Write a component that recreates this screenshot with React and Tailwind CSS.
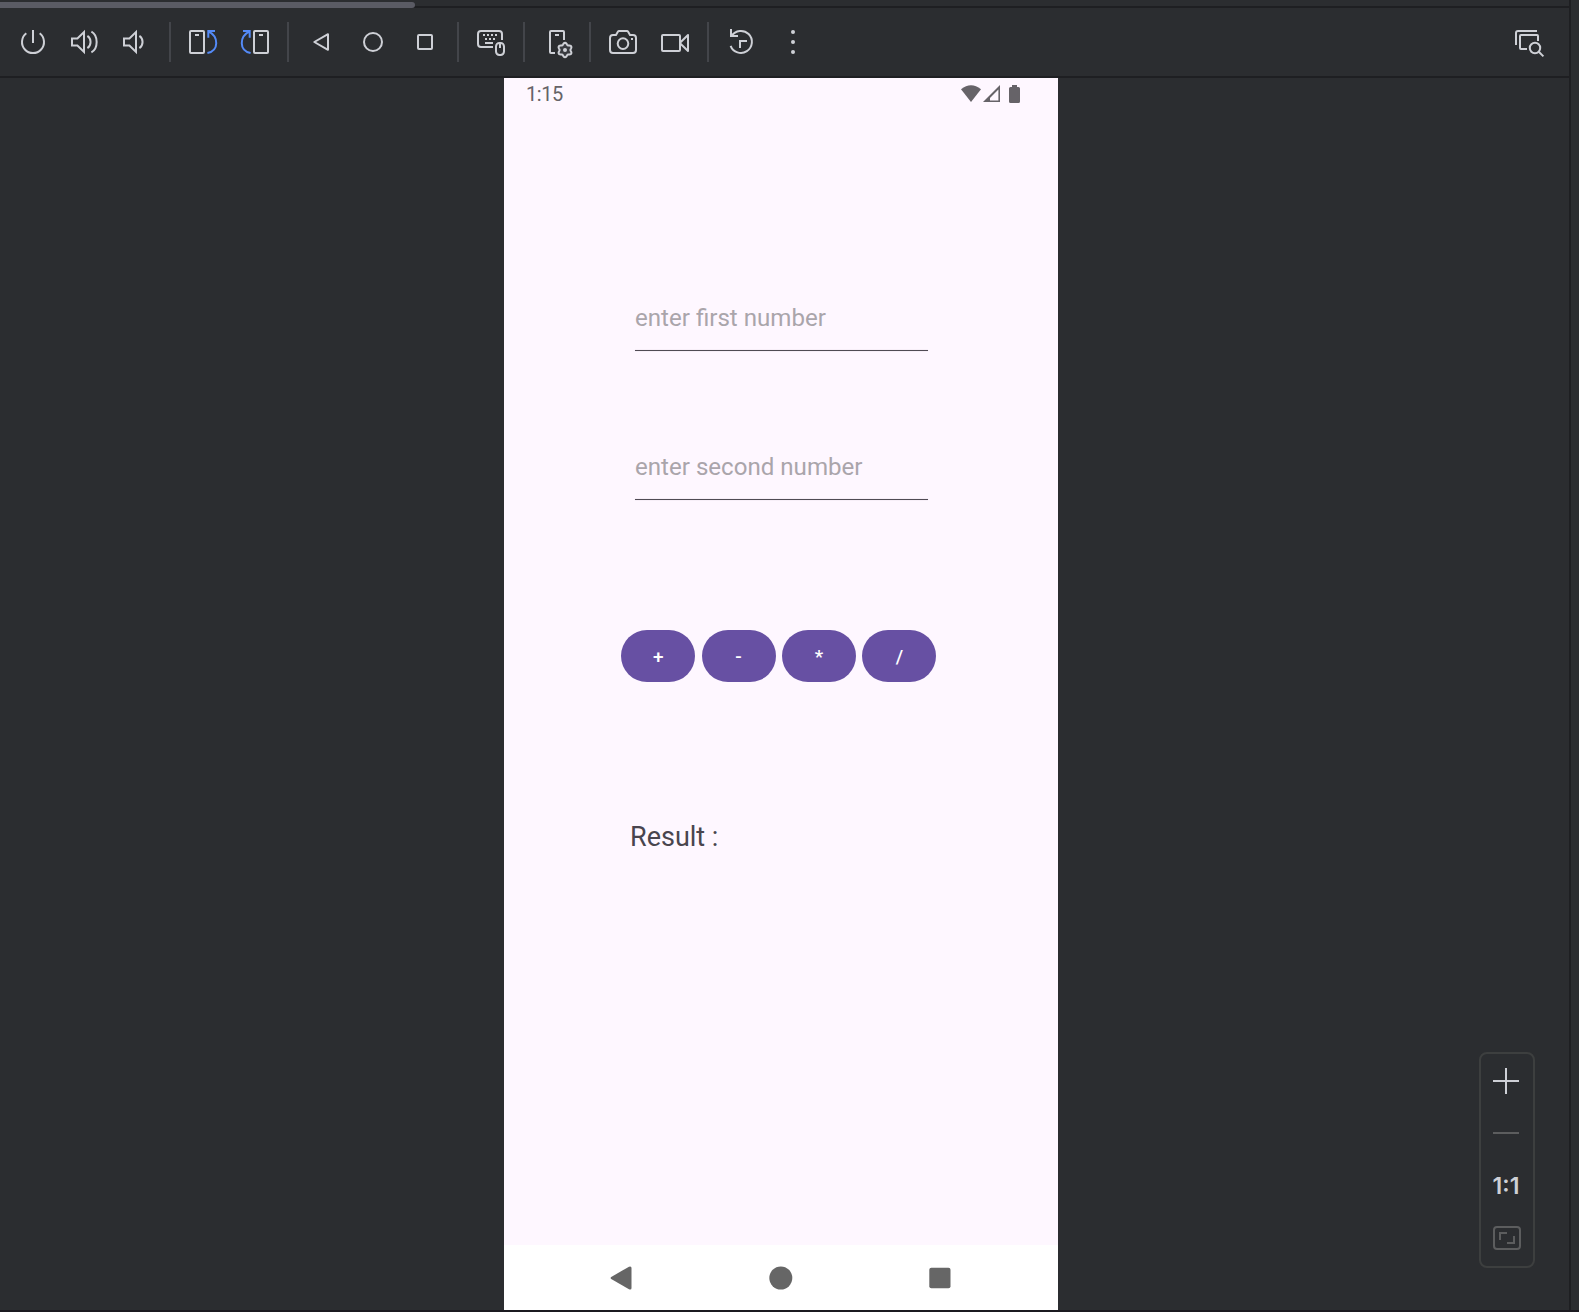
import React from "react";

const LIGHT = "#ced0d6";

function Icon({ children, className = "" }) {
  return (
    <svg
      className={`h-10 w-10 shrink-0 ${className}`}
      viewBox="0 0 40 40"
      fill="none"
      stroke={LIGHT}
      strokeWidth="2"
    >
      {children}
    </svg>
  );
}

function Separator() {
  return <div className="h-10 w-0.5 shrink-0 bg-[#43454a]" />;
}

const SPEAKER = "M7 16.4H12.4L19 10V30L12.4 23.6H7Z";

function RotateDrawing() {
  return (
    <>
      <rect x="7" y="9" width="14" height="22" rx="1" />
      <path d="M12 13H16" />
      <path d="M32 9H25.3V15.7M25.5 9.3C35.8 14.5 36.2 28.5 24.4 31" stroke="#548af7" />
    </>
  );
}

const GEAR = Array.from({ length: 72 }, (_, i) => {
  const a = (i / 72) * Math.PI * 2;
  const r = 6.3 + 0.9 * Math.cos(6 * a);
  return `${(28 + r * Math.sin(a)).toFixed(2)},${(28 - r * Math.cos(a)).toFixed(2)}`;
}).join(" ");

function Toolbar() {
  return (
    <div className="flex h-[70px] shrink-0 items-center justify-between border-b-2 border-[#1e1f22] pl-[13px] pr-5">
      <div className="flex items-center gap-3">
        <Icon>
          <path d="M13.3 11.3A11 11 0 1 0 26.7 11.3M20 8V21" />
        </Icon>
        <Icon>
          <path d={SPEAKER} />
          <path d="M22.4 13.8C26.6 16.5 26.6 23.5 22.4 26.2M26.4 9.6C33.4 13.5 33.4 26.5 26.4 30.4" />
        </Icon>
        <Icon>
          <path d={SPEAKER} />
          <path d="M22.4 13.8C26.6 16.5 26.6 23.5 22.4 26.2" />
        </Icon>
        <Separator />
        <Icon>
          <RotateDrawing />
        </Icon>
        <Icon className="-scale-x-100">
          <RotateDrawing />
        </Icon>
        <Separator />
        <Icon>
          <path d="M27 12.2V27.8L13.3 20Z" strokeLinejoin="round" />
        </Icon>
        <Icon>
          <circle cx="20" cy="20" r="9" />
        </Icon>
        <Icon>
          <rect x="13" y="13" width="14" height="14" rx="1" />
        </Icon>
        <Separator />
        <Icon>
          <path d="M31 18V12A3 3 0 0 0 28 9H10A3 3 0 0 0 7 12V22A3 3 0 0 0 10 25H22" />
          <path d="M12 13H26" strokeDasharray="2 2" />
          <path d="M14 17H24" strokeDasharray="2 2" />
          <path d="M14 21H22M29 21V26" />
          <rect x="25" y="21" width="8" height="12" rx="3.4" />
        </Icon>
        <Separator />
        <Icon>
          <path d="M27 18V10A1 1 0 0 0 26 9H14A1 1 0 0 0 13 10V30A1 1 0 0 0 14 31H18M18 13H22" />
          <polygon points={GEAR} fill="#393b40" />
          <circle cx="28" cy="28" r="2" fill={LIGHT} stroke="none" />
        </Icon>
        <Separator />
        <Icon>
          <path d="M10 13H13L15 9.6Q15.4 9 16 9H24Q24.6 9 25 9.6L27 13H30A3 3 0 0 1 33 16V28A3 3 0 0 1 30 31H10A3 3 0 0 1 7 28V16A3 3 0 0 1 10 13Z" />
          <circle cx="20" cy="21.6" r="5.3" />
          <path d="M28 17H30" />
        </Icon>
        <Icon>
          <rect x="7" y="13" width="18" height="16" rx="1" />
          <path d="M25.5 20.2L33 13V29L25.5 21.8" strokeLinejoin="round" />
        </Icon>
        <Separator />
        <Icon>
          <path d="M10 7V14H17M10.6 14A11 11 0 1 1 9.6 23.8M19 26V19H26" />
        </Icon>
        <Icon>
          <g fill={LIGHT} stroke="none">
            <circle cx="20" cy="10" r="2" />
            <circle cx="20" cy="20" r="2" />
            <circle cx="20" cy="30" r="2" />
          </g>
        </Icon>
      </div>
      <Icon>
        <path d="M7 23V11A2 2 0 0 1 9 9H28" />
        <path d="M29 19V14A1 1 0 0 0 28 13H12A1 1 0 0 0 11 14V26A1 1 0 0 0 12 27H18" />
        <circle cx="26" cy="26" r="5.2" />
        <path d="M29.8 29.8L34.4 34.4" />
      </Icon>
    </div>
  );
}

function Field({ text }) {
  return (
    <div className="flex h-[47px] w-[293px] flex-col justify-between">
      <div className="text-[24.1px] leading-7 text-[#aaa5ab]">{text}</div>
      <div className="h-px bg-[#504b54] shadow-[0_0_1px_#b5afb8]" />
    </div>
  );
}

function Phone() {
  return (
    <div className="flex h-full w-[554px] flex-col bg-[#fef7ff] font-['Roboto',sans-serif]">
      <div className="flex h-8 items-center justify-between pl-[22px] pr-[38px] text-[#666368]">
        <span className="text-[20px] leading-8 tracking-[-0.4px]">1:15</span>
        <svg className="h-[18px] w-[59px]" viewBox="0 0 59 18" fill="currentColor">
          <path d="M0 4.3Q10-3.6 20 4.3L10 17Z" />
          <path fillRule="evenodd" d="M39 0V17H22ZM37.4 4.4L29 13V15.4H37.4Z" />
          <path d="M51 0H56V2H57.5Q59 2 59 3.5V16.5Q59 18 57.5 18H49.5Q48 18 48 16.5V3.5Q48 2 49.5 2H51Z" />
        </svg>
      </div>
      <div className="flex flex-1 flex-col">
        <div className="flex flex-col gap-[102px] pl-[131px] pt-[194px]">
          <Field text="enter first number" />
          <Field text="enter second number" />
        </div>
        <div className="mt-[130px] flex gap-[6.4px] pl-[117.2px]">
          {["+", "-", "*", "/"].map((op) => (
            <button
              key={op}
              className="h-[52px] w-[74px] rounded-[26px] bg-[#6750a3] pt-0.5 text-[19px] font-medium text-white"
            >
              {op}
            </button>
          ))}
        </div>
        <div className="mt-[139px] pl-[126px] text-[27px] leading-8 text-[#49454e]">Result :</div>
      </div>
      <div className="flex h-[65px] items-center bg-white pl-[106px]">
        <svg className="h-6 w-[342px]" viewBox="0 0 342 24" fill="#666">
          <path d="M1.2 10.9L19 .7Q21.5-.2 21.5 2V22Q21.5 24.2 19 23.3L1.2 13.1Q0 12 1.2 10.9Z" />
          <circle cx="170.8" cy="12" r="11.5" />
          <rect x="319.3" y="1.7" width="21.2" height="20.6" rx="2" />
        </svg>
      </div>
    </div>
  );
}

function ZoomPanel() {
  return (
    <div className="absolute right-[34px] bottom-[42px] flex h-[216px] w-14 flex-col items-center justify-between rounded-lg border-2 border-[#3d3f3f] pt-[7px] pr-0.5 pb-2">
      <Icon>
        <path d="M7 20H33M20 7V33" />
      </Icon>
      <Icon>
        <path d="M7 20H33" stroke="#5c5d5e" />
      </Icon>
      <div className="font-['Inter',sans-serif] text-[23px] leading-10 font-semibold text-[#ced0d6]">
        1:1
      </div>
      <Icon>
        <g stroke="#5c5d5e">
          <rect x="8" y="9" width="26" height="22" rx="3" />
          <path d="M14 22V15H21M28 18V25H21" />
        </g>
      </Icon>
    </div>
  );
}

export default function App() {
  return (
    <div className="flex h-[1312px] w-[1579px] flex-col overflow-hidden border-b-2 border-[#1b1a20] bg-[#2b2d30]">
      <div className="flex min-h-0 flex-1">
        <div className="relative flex w-[1571px] flex-col border-r-2 border-[#1e1f22]">
          <div className="h-2 shrink-0 border-b-2 border-[#1e1f22]">
            <div className="relative top-0.5 h-1.5 w-[415px] rounded-r-full bg-[#5a5b64]" />
          </div>
          <Toolbar />
          <div className="flex min-h-0 flex-1 pl-[504px]">
            <Phone />
          </div>
          <ZoomPanel />
        </div>
      </div>
    </div>
  );
}
